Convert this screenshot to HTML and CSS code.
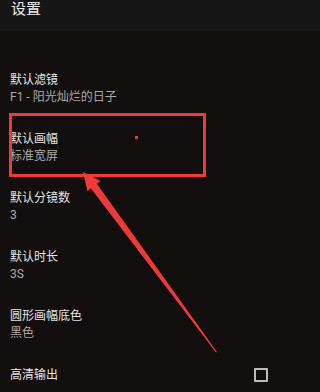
FILE: index.html
```html
<!DOCTYPE html>
<html lang="zh">
<head>
<meta charset="utf-8">
<link rel="stylesheet" href="styles.css">
</head>
<body>
<div class="screen">
  <header class="topbar"><h1 class="title">设置</h1></header>
  <ul class="list">
    <li class="row"><div class="label">默认滤镜</div><div class="value">F1 - 阳光灿烂的日子</div></li>
    <li class="row"><div class="label">默认画幅</div><div class="value">标准宽屏</div></li>
    <li class="row"><div class="label">默认分镜数</div><div class="value">3</div></li>
    <li class="row"><div class="label">默认时长</div><div class="value">3S</div></li>
    <li class="row"><div class="label">圆形画幅底色</div><div class="value">黑色</div></li>
    <li class="row row-check"><div class="label">高清输出</div><span class="checkbox"></span></li>
  </ul>
  <div class="mark-box"></div>
  <div class="mark-dot"></div>
  <svg class="mark-arrow" width="282" height="392" viewBox="0 0 282 392">
    <polygon fill="#f03a3a" points="83,172 100.5,181 96.8,183.8 217,352 216,352.5 90.8,188.2 87.5,191.5"/>
  </svg>
</div>
</body>
</html>
```
FILE: styles.css
```css
html, body {
  margin: 0;
  padding: 0;
  background: #130f0f;
}
.screen {
  position: relative;
  min-width: 282px;
  height: 392px;
  overflow: hidden;
  background: #130f0f;
  font-family: Roboto, "Noto Sans CJK SC", sans-serif;
}
.topbar {
  height: 31px;
  background: #171616;
  padding-left: 11px;
  box-sizing: border-box;
}
.title {
  margin: 0;
  font-size: 15px;
  line-height: 18px;
  font-weight: normal;
  color: #ececec;
}
.list {
  list-style: none;
  width: 282px;
  margin: 29px 0 0 0;
  padding: 0;
}
.row {
  height: 59px;
  box-sizing: border-box;
  padding: 12px 14px 0 10px;
}
.label {
  font-size: 12px;
  line-height: 17px;
  color: #e2e2e2;
}
.value {
  font-size: 12px;
  line-height: 17px;
  color: #a9a9a9;
}
.row-check {
  display: flex;
  align-items: center;
  justify-content: space-between;
  height: 40px;
  padding-top: 0;
}
.checkbox {
  width: 10px;
  height: 10px;
  border: 2px solid #bdbdbd;
  border-radius: 1px;
  margin-top: -1px;
}
.mark-box {
  position: absolute;
  left: 9px;
  top: 113px;
  width: 191px;
  height: 58px;
  border: 3px solid #f03a3a;
}
.mark-dot {
  position: absolute;
  left: 135px;
  top: 136px;
  width: 3px;
  height: 3px;
  background: #f03a3a;
}
.mark-arrow {
  position: absolute;
  left: 0;
  top: 0;
}
```
